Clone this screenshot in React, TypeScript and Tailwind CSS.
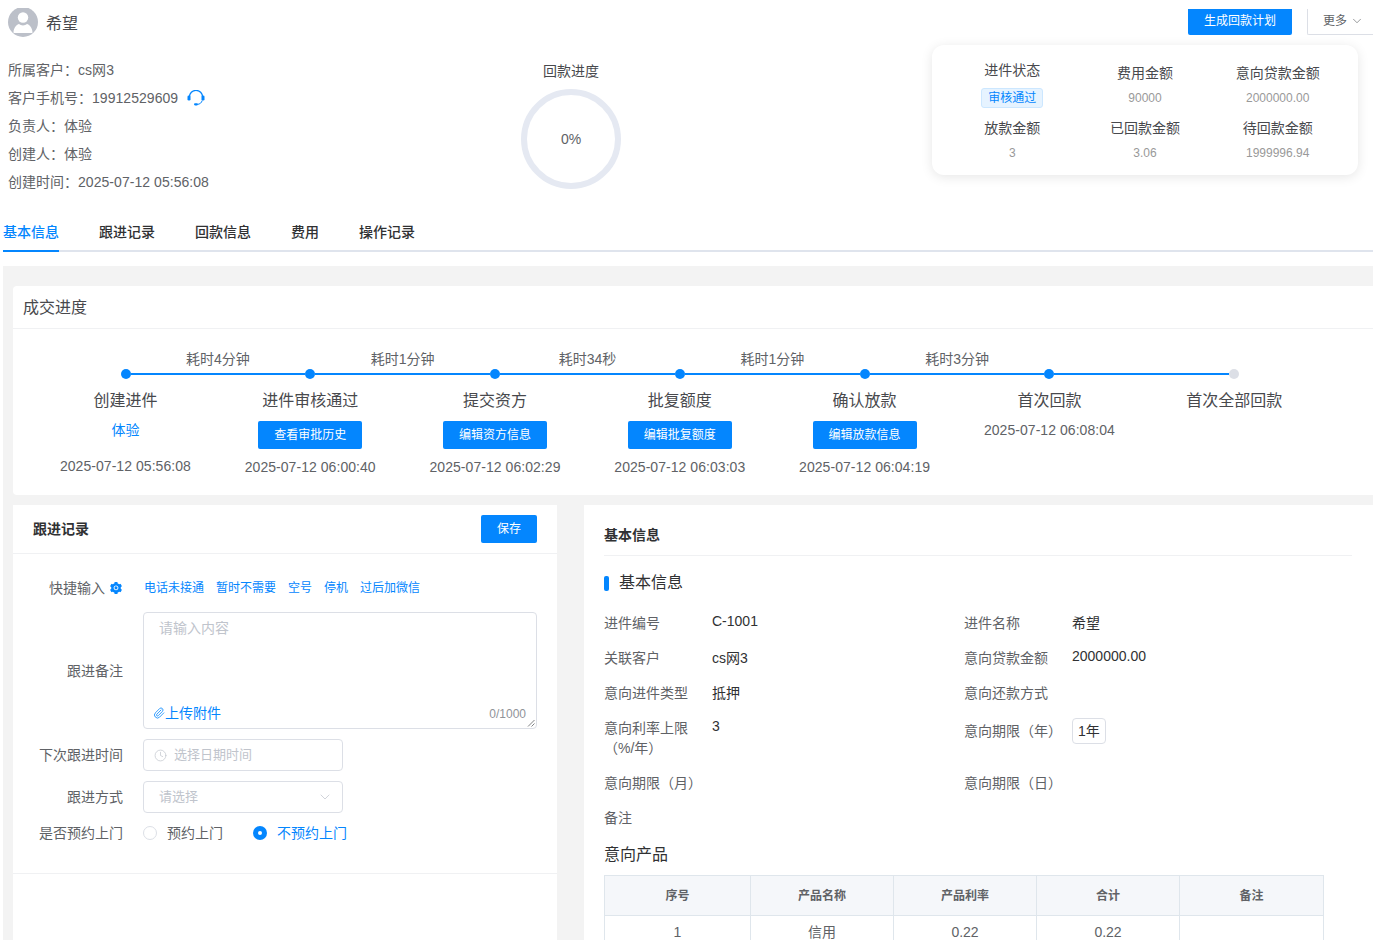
import React from 'react';
import { ChevronDown, Clock, Paperclip } from 'lucide-react';
import { AiFillSetting } from 'react-icons/ai';

const infoLines = [
  { label: '所属客户：', value: 'cs网3' },
  { label: '客户手机号：', value: '19912529609', phone: true },
  { label: '负责人：', value: '体验' },
  { label: '创建人：', value: '体验' },
  { label: '创建时间：', value: '2025-07-12 05:56:08' },
];

const tabs = ['基本信息', '跟进记录', '回款信息', '费用', '操作记录'];

const steps = [
  { title: '创建进件', owner: '体验', time: '2025-07-12 05:56:08' },
  { title: '进件审核通过', button: '查看审批历史', time: '2025-07-12 06:00:40' },
  { title: '提交资方', button: '编辑资方信息', time: '2025-07-12 06:02:29' },
  { title: '批复额度', button: '编辑批复额度', time: '2025-07-12 06:03:03' },
  { title: '确认放款', button: '编辑放款信息', time: '2025-07-12 06:04:19' },
  { title: '首次回款', time: '2025-07-12 06:08:04' },
  { title: '首次全部回款' },
];

const durations = ['耗时4分钟', '耗时1分钟', '耗时34秒', '耗时1分钟', '耗时3分钟'];

const quickInputs = ['电话未接通', '暂时不需要', '空号', '停机', '过后加微信'];

const Headset = () => (
  <svg width="18" height="16" viewBox="0 0 18 16" fill="none">
    <path d="M2.4 7A6.6 6.6 0 0 1 15.6 7" stroke="#0486fe" strokeWidth="1.3" />
    <path d="M15.2 10.5C14.6 12.8 12.8 14.2 10.5 14.4" stroke="#0486fe" strokeWidth="1" />
    <rect x="0.5" y="5.5" width="3" height="5" rx="1.3" fill="#0486fe" />
    <rect x="14.5" y="5.5" width="3" height="5" rx="1.3" fill="#0486fe" />
    <rect x="7" y="13.2" width="4" height="2.2" rx="1.1" fill="#0486fe" />
  </svg>
);

const Avatar = () => (
  <div className="h-[30px] w-[30px] shrink-0 overflow-hidden rounded-full bg-[#bcc0c9]">
    <svg width="30" height="30" viewBox="0 0 30 30" fill="#fff">
      <circle cx="15" cy="10.5" r="5.2" />
      <path d="M5.5 25.5c0-5 3.6-8 5.5-8.5 1 .9 2.4 1.4 4 1.4s3-.5 4-1.4c1.9.5 5.5 3.5 5.5 8.5 0 .3-.2.5-.5.5h-18c-.3 0-.5-.2-.5-.5Z" />
    </svg>
  </div>
);

const StatCell = ({ title, value, offset }: { title: string; value: string; offset?: boolean }) => (
  <div className="flex flex-col items-center">
    <div className={`text-[14px] leading-[20px] text-[#48494d] ${offset ? 'mt-[3px]' : ''}`}>{title}</div>
    <div className="mt-[5px] text-[12px] leading-[20px] text-[#999]">{value}</div>
  </div>
);

const FormLabel = ({ children }: { children: React.ReactNode }) => (
  <div className="w-[110px] shrink-0 text-right text-[14px] text-[#606266]">{children}</div>
);

const InfoField = ({ label, value, valueClass }: { label: React.ReactNode; value?: React.ReactNode; valueClass?: string }) => (
  <div className="flex h-[35px] text-[14px] leading-[20px]">
    <div className="w-[108px] shrink-0 whitespace-nowrap pt-[5px] text-[#606266]">{label}</div>
    <div className={`text-[#303133] ${valueClass ?? 'pt-[5px]'}`}>{value}</div>
  </div>
);

export default function App() {
  return (
    <div
      className="h-[940px] overflow-hidden bg-white"
      style={{ fontFamily: '"Liberation Sans", "Noto Sans CJK SC", sans-serif' }}
    >
      {/* Header */}
      <div className="flex h-[266px] flex-col pl-[3px] pt-[8px]">
        <div className="flex h-[37px] shrink-0 items-start justify-between overflow-hidden">
          <div className="flex items-center gap-[8px] pl-[5px]">
            <div className="-mt-[1px]">
              <Avatar />
            </div>
            <span className="mt-[3px] text-[16px] leading-[26px] text-[#48494d]">希望</span>
          </div>
          <div className="flex items-start gap-[15px]">
            <button className="mt-[1px] h-[26px] w-[104px] rounded-b-[2px] bg-[#0486fe] pb-[2px] text-[12px] text-white">生成回款计划</button>
            <button className="mt-[1px] flex h-[26px] w-[66px] items-center gap-[3px] rounded-bl-[2px] border-b border-l border-[#dcdfe6] pb-[2px] pl-[15px] text-[12px] text-[#606266]">
              更多
              <ChevronDown size={14} strokeWidth={1.1} />
            </button>
          </div>
        </div>

        <div className="flex h-[143px] shrink-0">
          <div className="w-[518px] pl-[5px] pt-[11px]">
            {infoLines.map((line) => (
              <div key={line.label} className="flex h-[28px] items-center text-[14px] text-[#606266]">
                <span>{line.label}</span>
                <span className="tracking-[0.05px]">{line.value}</span>
                {line.phone && (
                  <span className="ml-[9px]">
                    <Headset />
                  </span>
                )}
              </div>
            ))}
          </div>
          <div className="flex w-[100px] shrink-0 flex-col items-center">
            <div className="mt-[16px] whitespace-nowrap text-[14px] leading-[20px] text-[#48494d]">回款进度</div>
            <div className="mt-[8px] flex h-[100px] w-[100px] shrink-0 items-center justify-center rounded-full border-[6px] border-[#e5e9f2] text-[14px] text-[#606266]">
              0%
            </div>
          </div>
          <div className="ml-[311px] h-[130px] w-[426px] rounded-[12px] bg-white px-[14px] pt-[15px] shadow-[0_2px_12px_rgba(0,0,0,0.1)]">
            <div className="grid grid-cols-3">
              <div className="flex flex-col items-center">
                <div className="text-[14px] leading-[20px] text-[#48494d]">进件状态</div>
                <span className="mt-[8px] flex h-[20px] items-center rounded-[3px] border border-[#cce7ff] bg-[#e6f3ff] px-[6px] text-[12px] text-[#0486fe]">审核通过</span>
              </div>
              <StatCell title="费用金额" value="90000" offset />
              <StatCell title="意向贷款金额" value="2000000.00" offset />
            </div>
            <div className="mt-[10px] grid grid-cols-3">
              <StatCell title="放款金额" value="3" />
              <StatCell title="已回款金额" value="3.06" />
              <StatCell title="待回款金额" value="1999996.94" />
            </div>
          </div>
        </div>

        {/* Tabs */}
        <div className="mt-[34px] flex h-[30px] shrink-0 gap-[40px] border-b-2 border-[#dfe4ed]">
          {tabs.map((tab, i) => (
            <div
              key={tab}
              className={`h-[30px] text-[14px] font-medium leading-[20px] ${i === 0 ? 'border-b-2 border-[#0486fe] text-[#0486fe]' : 'text-[#303133]'}`}
            >
              {tab}
            </div>
          ))}
        </div>
      </div>

      {/* Body */}
      <div className="ml-[3px] bg-[#f3f3f3] pl-[10px] pt-[20px]">
        <div className="h-[209px] rounded-l-[4px] bg-white">
          <div className="flex h-[43px] items-center border-b border-[#f0f1f3] pl-[10px] pt-[2px] text-[16px] text-[#48494d]">成交进度</div>
          <div className="pl-[20px] pt-[20px]">
            <div className="flex h-[20px] pl-[92.5px]">
              {durations.map((d) => (
                <div key={d} className="w-[184.8px] text-center text-[14px] leading-[20px] text-[#606266]">{d}</div>
              ))}
            </div>
            <div className="flex h-[10px] items-center pl-[87.5px]">
              {steps.map((s, i) => (
                <React.Fragment key={s.title}>
                  <div className={`h-[10px] w-[10px] shrink-0 rounded-full ${i === 6 ? 'bg-[#dcdfe6]' : 'bg-[#0486fe]'}`} />
                  {i < 6 && <div className="h-[2px] w-[174.8px] shrink-0 bg-[#0486fe]" />}
                </React.Fragment>
              ))}
            </div>
            <div className="mt-[12px] flex">
              {steps.map((s) => (
                <div key={s.title} className="flex w-[184.8px] flex-col items-center">
                  <div className="text-[16px] leading-[20px] text-[#48494d]">{s.title}</div>
                  {s.owner && <div className="mt-[9px] text-[14px] leading-[20px] text-[#0486fe]">{s.owner}</div>}
                  {s.button && (
                    <button className="mt-[10px] h-[28px] w-[104px] rounded-[2px] bg-[#0486fe] text-[12px] text-white">{s.button}</button>
                  )}
                  {s.time && (
                    <div className={`${s.button ? 'mt-[8px]' : s.owner ? 'mt-[16px]' : 'mt-[9px]'} whitespace-nowrap text-[14px] leading-[20px] tracking-[0.05px] text-[#606266]`}>
                      {s.time}
                    </div>
                  )}
                </div>
              ))}
            </div>
          </div>
        </div>

        <div className="mt-[10px] flex gap-[27px]">
          {/* Follow-up form */}
          <div className="h-[440px] w-[544px] shrink-0 bg-white">
            <div className="flex h-[49px] items-center justify-between border-b border-[#f0f1f3] px-[20px]">
              <span className="text-[14px] font-bold text-[#303133]">跟进记录</span>
              <button className="h-[28px] w-[56px] rounded-[2px] bg-[#0486fe] text-[12px] text-white">保存</button>
            </div>
            <div className="h-[320px] border-b border-[#f0f1f3] pr-[20px] pt-[24px]">
              <div className="flex h-[20px] items-center">
                <div className="flex w-[110px] shrink-0 items-center justify-end gap-[4px] text-[14px] text-[#606266]">
                  快捷输入
                  <AiFillSetting size={14} color="#0486fe" />
                </div>
                <div className="ml-[21px] flex gap-[12px] text-[12px] text-[#0486fe]">
                  {quickInputs.map((q) => (
                    <span key={q}>{q}</span>
                  ))}
                </div>
              </div>
              <div className="mt-[14px] flex items-center gap-[20px]">
                <div className="w-[110px] shrink-0 pt-[2px] text-right text-[14px] text-[#606266]">跟进备注</div>
                <div className="relative h-[117px] w-[394px] rounded-[4px] border border-[#dcdfe6] px-[15px] pt-[5px]">
                  <div className="text-[14px] leading-[20px] text-[#c0c4cc]">请输入内容</div>
                  <div className="absolute bottom-[5px] left-[9px] flex items-center text-[14px] leading-[20px] text-[#0486fe]">
                    <Paperclip size={12} strokeWidth={1.6} />
                    上传附件
                  </div>
                  <div className="absolute bottom-[5px] right-[10px] text-[12px] text-[#909399]">0/1000</div>
                  <svg className="absolute bottom-[1px] right-[1px]" width="8" height="8" viewBox="0 0 8 8" stroke="#606266" strokeWidth="0.8">
                    <path d="M1 7.5 7.5 1M4.5 7.5l3-3" />
                  </svg>
                </div>
              </div>
              <div className="mt-[10px] flex items-center gap-[20px]">
                <FormLabel>下次跟进时间</FormLabel>
                <div className="flex h-[32px] w-[200px] items-center rounded-[4px] border border-[#dcdfe6] pl-[10px] text-[13px] text-[#c0c4cc]">
                  <Clock size={13} strokeWidth={1.3} />
                  <span className="ml-[7px]">选择日期时间</span>
                </div>
              </div>
              <div className="mt-[10px] flex items-center gap-[20px]">
                <FormLabel>跟进方式</FormLabel>
                <div className="flex h-[32px] w-[200px] items-center justify-between rounded-[4px] border border-[#dcdfe6] pl-[15px] pr-[9px] text-[13px] text-[#c0c4cc]">
                  请选择
                  <ChevronDown size={16} strokeWidth={1.1} />
                </div>
              </div>
              <div className="mt-[10px] flex h-[20px] items-center gap-[20px]">
                <FormLabel>是否预约上门</FormLabel>
                <div className="flex items-center text-[14px]">
                  <span className="h-[14px] w-[14px] rounded-full border border-[#dcdfe6]" />
                  <span className="ml-[10px] text-[#606266]">预约上门</span>
                  <span className="ml-[30px] flex h-[14px] w-[14px] items-center justify-center rounded-full bg-[#0486fe]">
                    <span className="h-[4px] w-[4px] rounded-full bg-white" />
                  </span>
                  <span className="ml-[10px] text-[#0486fe]">不预约上门</span>
                </div>
              </div>
            </div>
          </div>

          {/* Basic info */}
          <div className="min-w-0 flex-1 bg-white pl-[20px] pr-[21px]">
            <div className="flex h-[51px] items-end border-b border-[#f0f1f3] pb-[10px] text-[14px] font-bold leading-[20px] text-[#303133]">基本信息</div>
            <div className="mt-[19px] flex h-[16px] items-center gap-[10px]">
              <span className="h-[15px] w-[5px] rounded-[2px] bg-[#0486fe]" />
              <span className="text-[16px] text-[#303133]">基本信息</span>
            </div>
            <div className="mt-[17px] grid grid-cols-[360px_1fr]">
              <InfoField label="进件编号" value="C-1001" valueClass="pt-[3px]" />
              <InfoField label="进件名称" value="希望" />
              <InfoField label="关联客户" value="cs网3" />
              <InfoField label="意向贷款金额" value="2000000.00" valueClass="pt-[3px]" />
              <InfoField label="意向进件类型" value="抵押" />
              <InfoField label="意向还款方式" />
              <div className="flex h-[55px] text-[14px] leading-[20px]">
                <div className="w-[108px] shrink-0 pt-[5px] text-[#606266]">
                  意向利率上限
                  <br />
                  （%/年）
                </div>
                <div className="pt-[3px] text-[#303133]">3</div>
              </div>
              <div className="flex h-[55px] text-[14px] leading-[20px]">
                <div className="w-[108px] shrink-0 whitespace-nowrap pt-[8px] text-[#606266]">意向期限（年）</div>
                <div className="pt-[5px]">
                  <span className="inline-flex h-[26px] items-center rounded-[4px] border border-[#dcdfe6] px-[5px] text-[#303133]">1年</span>
                </div>
              </div>
              <InfoField label="意向期限（月）" />
              <InfoField label="意向期限（日）" />
              <InfoField label="备注" />
            </div>
            <div className="mt-[6px] text-[16px] leading-[22px] text-[#303133]">意向产品</div>
            <table className="mt-[9px] w-[719px] table-fixed border-collapse text-center">
              <colgroup>
                <col className="w-[146px]" />
                <col className="w-[143px]" />
                <col className="w-[143px]" />
                <col className="w-[143px]" />
                <col className="w-[144px]" />
              </colgroup>
              <thead>
                <tr className="h-[40px] bg-[#f5f7fa] text-[12px] font-bold text-[#606266]">
                  {['序号', '产品名称', '产品利率', '合计', '备注'].map((h) => (
                    <th key={h} className="border border-[#dfe6ec]">{h}</th>
                  ))}
                </tr>
              </thead>
              <tbody>
                <tr className="h-[34px] text-[14px] text-[#606266]">
                  {['1', '信用', '0.22', '0.22', ''].map((c, i) => (
                    <td key={i} className="border border-[#dfe6ec]">{c}</td>
                  ))}
                </tr>
              </tbody>
            </table>
          </div>
        </div>
      </div>
    </div>
  );
}
